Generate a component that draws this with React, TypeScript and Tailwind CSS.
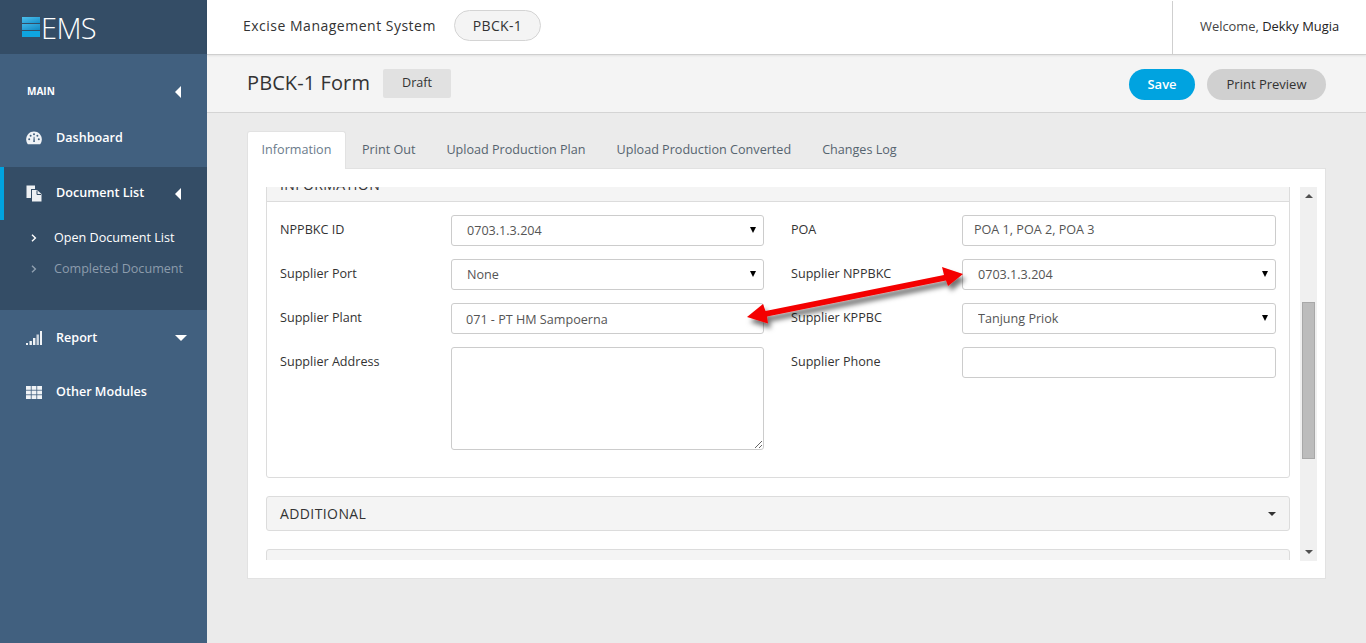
import React from 'react';

const font = "font-['Open_Sans',sans-serif]";

function GaugeIcon() {
  return (
    <svg width="16" height="14" viewBox="0 0 16 14" fill="#f0f3f6">
      <path d="M8 0.5C3.7 0.5 0.2 4 0.2 8.3c0 1.9.6 3.6 1.7 5h12.2c1.1-1.4 1.7-3.1 1.7-5C15.8 4 12.3.5 8 .5z" />
      <g fill="#41607f">
        <circle cx="3.2" cy="8.2" r="1" />
        <circle cx="4.6" cy="4.7" r="1" />
        <circle cx="8" cy="3.2" r="1" />
        <circle cx="11.4" cy="4.7" r="1" />
        <circle cx="12.8" cy="8.2" r="1" />
        <path d="M7.2 11 L7.7 5.8 L8.5 5.8 L8.9 11 Z" />
      </g>
    </svg>
  );
}

function DocIcon() {
  return (
    <svg width="16" height="17" viewBox="0 0 16 17">
      <path d="M0.5 0.5H9V4H5V13H0.5Z" fill="#eef1f4" />
      <path d="M6 5H11L15.5 9V16.5H6Z" fill="#eef1f4" />
      <path d="M11 5.5V9.5H15" fill="none" stroke="#344d66" />
    </svg>
  );
}

function BarsIcon() {
  return (
    <svg width="16" height="14" viewBox="0 0 16 14" fill="#f0f3f6">
      <rect x="0" y="12" width="2" height="2" />
      <rect x="3.5" y="10" width="2.4" height="4" />
      <rect x="7" y="7" width="2.4" height="7" />
      <rect x="10.5" y="3.5" width="2.4" height="10.5" opacity="0.8" />
      <rect x="14" y="0" width="2" height="14" />
    </svg>
  );
}

function GridIcon() {
  return (
    <svg width="16" height="13" viewBox="0 0 16 13" fill="#f0f3f6">
      {[0, 4.6, 9.2].map(y =>
        [0, 5.6, 11.2].map(x => <rect key={`${x}-${y}`} x={x} y={y} width="4.8" height="3.8" />)
      )}
    </svg>
  );
}

function Chevron({ dim }: { dim?: boolean }) {
  return (
    <svg width="6" height="8" viewBox="0 0 6 8" fill="none" stroke={dim ? '#90a0b0' : '#ffffff'} strokeWidth="1.4">
      <path d="M1 0.8 L4.4 4 L1 7.2" />
    </svg>
  );
}

function Logo() {
  return (
    <div className="h-[54px] bg-[#344d66] flex items-center pl-[22px]">
      <div className="w-[18px] h-[20px] flex flex-col justify-between">
        <div className="h-[6px] bg-gradient-to-br from-[#4cc0ec] to-[#0f8fca]" />
        <div className="h-[6px] bg-gradient-to-br from-[#3db4e6] to-[#0f88c2]" />
        <div className="h-[6px] bg-[#0ea5e0]" />
      </div>
      <span className="text-[29px] font-light leading-none tracking-[-0.6px] ml-[1px]">EMS</span>
    </div>
  );
}

function Sidebar() {
  return (
    <aside className="w-[207px] shrink-0 bg-[#41607f] text-white flex flex-col">
      <Logo />

      <div className="h-[113px] flex flex-col">
        <div className="h-[47px] mt-[14px] pl-[27px] pr-[26px] flex items-center justify-between">
          <span className="text-[10px] font-bold">MAIN</span>
          <div className="w-0 h-0 border-y-[6px] border-y-transparent border-r-[6px] border-r-white" />
        </div>
        <div className="flex items-center pl-[26px] mt-[14px]">
          <div className="w-[30px]"><GaugeIcon /></div>
          <span className="text-[12.6px] font-semibold">Dashboard</span>
        </div>
      </div>

      <div className="h-[143px] bg-[#344d66] relative">
        <div className="absolute left-0 top-0 w-[4px] h-[53px] bg-[#00a3e0]" />
        <div className="h-[53px] pl-[26px] pr-[26px] flex items-center">
          <div className="w-[30px]"><DocIcon /></div>
          <span className="text-[12.6px] font-semibold flex-1">Document List</span>
          <div className="w-0 h-0 border-y-[6px] border-y-transparent border-r-[6px] border-r-white" />
        </div>
        <div className="pl-[31px] mt-[7px] flex flex-col gap-[9px] text-[12.6px]">
          <div className="flex items-center h-[22px]">
            <div className="w-[23px]"><Chevron /></div>
            <span>Open Document List</span>
          </div>
          <div className="flex items-center h-[22px] text-[#8c9cac]">
            <div className="w-[23px]"><Chevron dim /></div>
            <span>Completed Document</span>
          </div>
        </div>
      </div>

      <div className="pl-[26px] pr-[20px] mt-[18px] h-[20px] flex items-center">
        <div className="w-[30px]"><BarsIcon /></div>
        <span className="text-[12.6px] font-semibold flex-1">Report</span>
        <div className="w-0 h-0 border-x-[6px] border-x-transparent border-t-[6px] border-t-white" />
      </div>
      <div className="pl-[26px] mt-[34px] h-[20px] flex items-center">
        <div className="w-[30px]"><GridIcon /></div>
        <span className="text-[12.6px] font-semibold">Other Modules</span>
      </div>
    </aside>
  );
}

function Control({ value, select, tight }: { value: string; select?: boolean; tight?: boolean }) {
  return (
    <div className="relative h-[31px]">
      {select ? (
        <select
          defaultValue={value}
          className="w-full h-full appearance-none bg-white border border-[#ccc] rounded-[3px] pl-[15px] pt-[2px] text-[12.6px] text-[#555] outline-none"
        >
          <option>{value}</option>
        </select>
      ) : (
        <input
          readOnly
          value={value}
          className={
            tight
              ? 'w-full h-full bg-white border border-[#ccc] rounded-[3px] px-[11px] pb-[2px] text-[12.6px] text-[#555] outline-none'
              : 'w-full h-full bg-white border border-[#ccc] rounded-[3px] px-[14px] pt-[2px] text-[12.6px] text-[#555] outline-none'
          }
        />
      )}
      {select && (
        <div className="absolute right-[8px] top-[12px] w-0 h-0 border-x-[3.5px] border-x-transparent border-t-[6px] border-t-black" />
      )}
    </div>
  );
}

function Label({ text, right }: { text: string; right?: boolean }) {
  return (
    <label className={right ? 'text-[12.6px] text-[#333] leading-[30px] pl-[27px]' : 'text-[12.6px] text-[#333] leading-[30px]'}>
      {text}
    </label>
  );
}

function Arrow() {
  return (
    <svg className="absolute left-[740px] top-[255px] pointer-events-none" width="240" height="85" viewBox="740 255 240 85">
      <defs>
        <filter id="arrow-shadow" x="-10%" y="-30%" width="120%" height="170%">
          <feDropShadow dx="3" dy="5" stdDeviation="2.5" floodColor="#000" floodOpacity="0.55" />
        </filter>
      </defs>
      <path
        d="M963 274 L942 267 L944 275 L765.5 311 L763 304 L747 317 L768 323.5 L767 316.5 L946 280.5 L948 286 Z"
        fill="#f40000"
        filter="url(#arrow-shadow)"
      />
    </svg>
  );
}

function Tab({ label, active }: { label: string; active?: boolean }) {
  return (
    <div
      className={
        active
          ? 'h-[38px] -mb-px w-[99px] text-center bg-white border border-b-0 border-[#e2e2e2] rounded-t-[3px] text-[12.6px] text-[#6b7b8b] leading-[36px]'
          : 'h-[37px] pl-[16px] pr-[15px] text-[12.6px] text-[#56646f] leading-[37px]'
      }
    >
      {label}
    </div>
  );
}

export default function App() {
  return (
    <div className={`${font} w-[1366px] h-[643px] flex overflow-hidden bg-[#ebebeb] relative`}>
      <Sidebar />
      <main className="flex-1 flex flex-col min-w-0">
        <header className="h-[55px] bg-white border-b border-[#cfcfcf] shadow-[0_1px_2px_rgba(0,0,0,0.08)] flex items-center pl-[36px] relative z-10">
          <span className="text-[14px] tracking-[0.5px] text-[#333] -mt-[4px]">Excise Management System</span>
          <div className="ml-[18px] h-[31px] w-[87px] rounded-full bg-[#f4f4f4] border border-[#d4d4d4] text-[14px] text-[#333] tracking-[0.3px] flex items-center justify-center -mt-[4px]">
            PBCK-1
          </div>
          <div className="ml-auto h-[53px] w-[194px] border-l border-[#cfcfcf] pl-[27px] text-[12.9px] text-[#444] flex items-center">
            Welcome,&nbsp;<span className="text-[#222]">Dekky Mugia</span>
          </div>
        </header>

        <div className="h-[58px] bg-[#f4f4f4] border-b border-[#d4d4d4] flex items-center pl-[40px] pr-[40px]">
          <h1 className="text-[20px] font-normal text-[#333] tracking-[0.1px] -mt-[2px]">PBCK-1 Form</h1>
          <div className="ml-[13px] h-[29px] w-[68px] bg-[#e1e1e1] rounded-[2px] text-[12.6px] text-[#333] flex items-center justify-center">
            Draft
          </div>
          <div className="ml-auto flex gap-[12px] mt-[1px]">
            <button className="h-[31px] w-[66px] pt-[2px] rounded-full bg-[#00a3e0] text-white text-[13px] font-semibold">Save</button>
            <button className="h-[31px] w-[119px] pt-[2px] rounded-full bg-[#d0d0d0] text-[#333] text-[13px]">Print Preview</button>
          </div>
        </div>

        <div className="pl-[40px] pr-[40px] pt-[18px]">
          <div className="flex h-[37px] items-end">
            <Tab label="Information" active />
            <Tab label="Print Out" />
            <Tab label="Upload Production Plan" />
            <Tab label="Upload Production Converted" />
            <Tab label="Changes Log" />
          </div>

          <div className="h-[411px] bg-white border border-[#e2e2e2] pt-[18px] pl-[18px] pr-[8px] flex">
            <div className="w-[1024px] h-[373px] overflow-hidden">
              <div className="-mt-[20px]">
                <div className="border border-[#dcdcdc] rounded-[3px] h-[311px]">
                  <div className="h-[34px] bg-[#f4f4f4] border-b border-[#dcdcdc] pl-[13px] text-[14px] tracking-[0.4px] text-[#333] leading-[34px]">
                    INFORMATION
                  </div>
                  <div className="pl-[13px] pr-[13px] pt-[13px] grid grid-cols-[171px_313px_198px_314px] gap-y-[13px]">
                    <Label text="NPPBKC ID" />
                    <Control value="0703.1.3.204" select />
                    <Label text="POA" right />
                    <Control value="POA 1, POA 2, POA 3" tight />
                    <Label text="Supplier Port" />
                    <Control value="None" select />
                    <Label text="Supplier NPPBKC" right />
                    <Control value="0703.1.3.204" select />
                    <Label text="Supplier Plant" />
                    <Control value="071 - PT HM Sampoerna" />
                    <Label text="Supplier KPPBC" right />
                    <Control value="Tanjung Priok" select />
                    <Label text="Supplier Address" />
                    <textarea
                      readOnly
                      className="h-[103px] bg-white border border-[#ccc] rounded-[3px] outline-none"
                    />
                    <Label text="Supplier Phone" right />
                    <Control value="" />
                  </div>
                </div>

                <div className="mt-[18px] h-[35px] bg-[#f4f4f4] border border-[#dcdcdc] rounded-[3px] pl-[13px] pr-[13px] flex items-center justify-between">
                  <span className="text-[14px] tracking-[0.4px] text-[#333]">ADDITIONAL</span>
                  <div className="w-0 h-0 border-x-[4px] border-x-transparent border-t-[4px] border-t-[#333]" />
                </div>

                <div className="mt-[18px] h-[35px] bg-[#f4f4f4] border border-[#dcdcdc] rounded-[3px]" />
              </div>
            </div>

            <div className="ml-[10px] w-[17px] h-[374px] bg-[#f0f0f0] flex flex-col items-center relative">
              <div className="mt-[7px] w-0 h-0 border-x-[4px] border-x-transparent border-b-[4px] border-b-[#505050]" />
              <div className="absolute left-[2px] top-[115px] w-[13px] h-[157px] bg-[#bcbcbc] border border-[#a8a8a8]" />
              <div className="mt-auto mb-[7px] w-0 h-0 border-x-[4px] border-x-transparent border-t-[4px] border-t-[#505050]" />
            </div>
          </div>
        </div>
      </main>
      <Arrow />
    </div>
  );
}
